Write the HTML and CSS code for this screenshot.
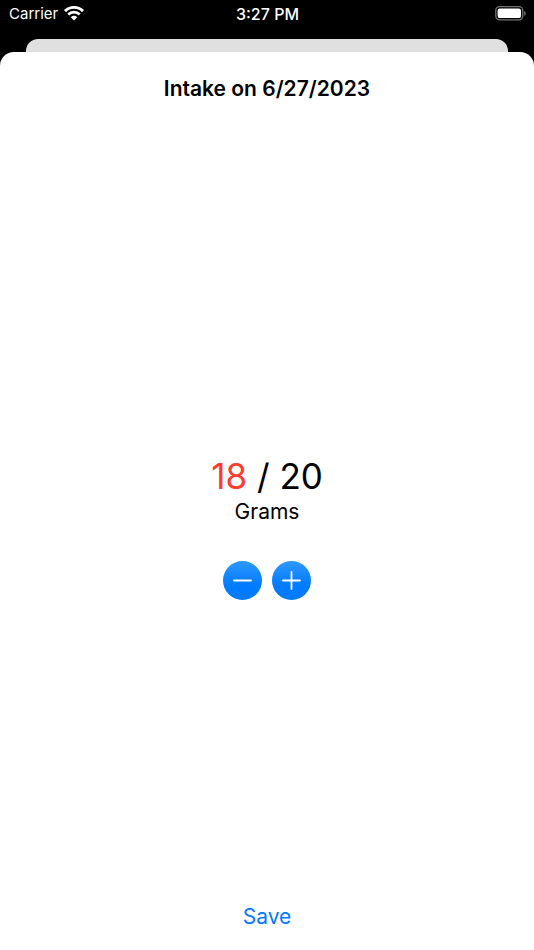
FILE: index.html
```html
<!DOCTYPE html>
<html lang="en">
<head>
    <meta charset="UTF-8" />
    <meta name="viewport" content="width=device-width, initial-scale=1.0"/>
    <title>Intake</title>
    <link rel="stylesheet" href="styles.css">
</head>
<body>
    <header class="status-bar">
        <div class="carrier">
            <span>Carrier</span>
            <svg class="wifi" viewBox="0 0 20 16" aria-hidden="true">
                <path d="M1 5.1a12.8 12.8 0 0 1 18 0" fill="none" stroke="#fff" stroke-width="2.9"/>
                <path d="M4.3 8.5a8 8 0 0 1 11.4 0" fill="none" stroke="#fff" stroke-width="2.7"/>
                <path d="M10 14.4 6.8 11.2a4.5 4.5 0 0 1 6.4 0Z" fill="#fff"/>
            </svg>
        </div>
        <time class="clock">3:27 PM</time>
        <svg class="battery" viewBox="0 0 31 16" aria-hidden="true">
            <rect x="0.8" y="0.7" width="27" height="13.2" rx="3.8" fill="none" stroke="#747474" stroke-width="1.3"/>
            <rect x="2.6" y="2.5" width="23.4" height="9.6" rx="2.2" fill="#fff"/>
            <path d="M29.2 5.1c2 .8 2 3.8 0 4.6Z" fill="#747474"/>
        </svg>
    </header>
    <div class="back-card"></div>
    <main class="sheet">
        <h1>Intake on 6/27/2023</h1>
        <section class="intake">
            <p class="amount"><span class="current">18</span> / 20</p>
            <p class="unit">Grams</p>
            <div class="stepper">
                <button type="button" aria-label="Decrease">
                    <svg viewBox="0 0 19 19" aria-hidden="true"><path d="M1 9.5h17"/></svg>
                </button>
                <button type="button" aria-label="Increase">
                    <svg viewBox="0 0 19 19" aria-hidden="true"><path d="M1 9.5h17M9.5 1v17"/></svg>
                </button>
            </div>
        </section>
        <button type="button" class="save">Save</button>
    </main>
</body>
</html>
```
FILE: styles.css
```css
* { box-sizing: border-box; }
body { margin: 0; min-height: 100vh; display: flex; flex-direction: column; font-family: Inter, "Liberation Sans", sans-serif; background-color: #000; color: #000; }
button { border: 0; padding: 0; font: inherit; cursor: pointer; }
.status-bar { display: grid; grid-template-columns: 1fr auto 1fr; align-items: center; height: 28px; margin-bottom: 11px; padding: 0 8px 0 9px; color: #fff; font-size: 15px; line-height: 28px; }
.carrier { display: flex; align-items: center; gap: 6px; }
.wifi { width: 20px; height: 16px; }
.clock { font-size: 16px; font-weight: 500; }
.battery { width: 31px; height: 16px; justify-self: end; }
.back-card { height: 13px; margin: 0 26px; border-radius: 12px 12px 0 0; background-color: #e0e0e0; }
.sheet { flex: 1; display: flex; flex-direction: column; align-items: center; padding: 20px 16px; border-radius: 14px 14px 0 0; background-color: #fff; }
h1 { margin: 0; font-size: 21px; font-weight: 600; line-height: 34px; }
.intake { flex: 1; display: flex; flex-direction: column; align-items: center; justify-content: center; padding-top: 44px; }
.amount { margin: 0; font-size: 35px; line-height: 44px; }
.current { color: #ff3b30; }
.unit { margin: 0 0 35px; font-size: 21px; line-height: 28px; }
.stepper { display: flex; gap: 10px; }
.stepper button { display: flex; align-items: center; justify-content: center; width: 39px; height: 39px; border-radius: 50%; background: linear-gradient(#2e98ff, #007aff 65%); }
.stepper svg { width: 19px; height: 19px; fill: none; stroke: #fff; stroke-width: 1.8; stroke-linecap: round; }
.save { background: none; color: #007aff; font-size: 21px; line-height: 26px; }
```
